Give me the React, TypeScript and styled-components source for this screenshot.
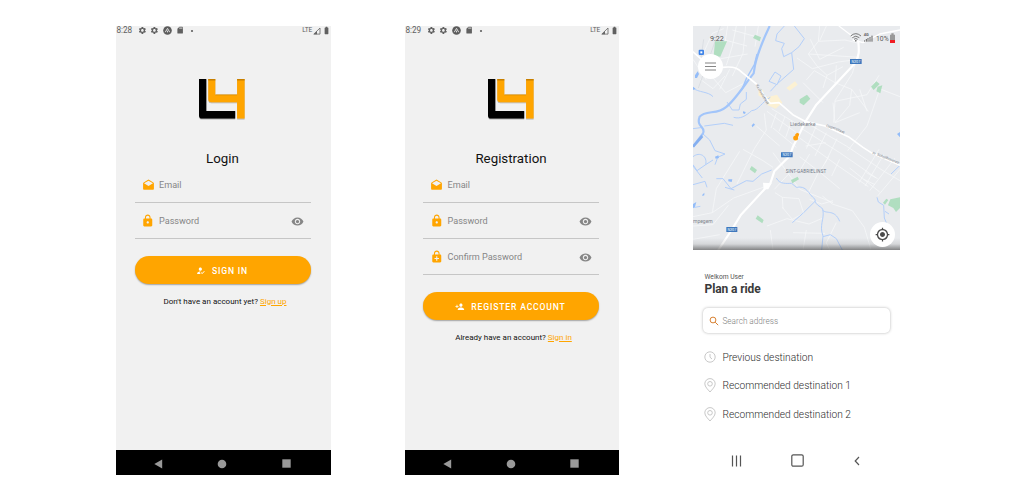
import React from "react";
import styled, { createGlobalStyle } from "styled-components";
import {
  MdBatteryFull,
  MdDrafts,
  MdEnhancedEncryption,
  MdHowToReg,
  MdLock,
  MdMyLocation,
  MdPersonAdd,
  MdSdCard,
  MdSettings,
  MdVisibility,
} from "react-icons/md";

const Global = createGlobalStyle`
  * { box-sizing: border-box; }
  body { margin: 0; background: #fff; font-family: Roboto, "Liberation Sans", sans-serif; }
  svg { display: block; flex: none; }
`;

const Stage = styled.main`
  display: flex;
  gap: 74px;
  width: 1024px;
  height: 500px;
  padding: 26px 0 25px 116px;
  overflow: hidden;
`;

const Phone = styled.section<{ $width: number }>`
  display: flex;
  flex-direction: column;
  flex: none;
  width: ${(p) => p.$width}px;
  height: 449px;
  background: #f1f1f1;
`;

const StatusBar = styled.header`
  display: flex;
  align-items: center;
  height: 9px;
  padding: 0 0 0 0.5px;
  color: #606060;
  font-size: 8.2px;
  line-height: 9px;
`;

const Clock = styled.span`
  width: 21px;
  letter-spacing: -0.1px;
`;

const StatusIcons = styled.div`
  display: flex;
  flex: 1;
  align-items: center;
  gap: 4px;
`;

const Signal = styled.div`
  display: flex;
  align-items: center;
  font-size: 6.6px;
  gap: 1px;
  letter-spacing: -0.2px;
`;

const LogoBox = styled.div<{ $lift: number }>`
  display: flex;
  justify-content: center;
  height: 114px;
  padding: ${(p) => 43 - p.$lift}px 3px 0 0;
`;

const Title = styled.h1`
  margin: 0;
  padding-right: 2px;
  height: 18px;
  line-height: 20px;
  text-align: center;
  font-size: 13.3px;
  font-weight: 400;
  color: #111;
`;

const Form = styled.div<{ $left: number }>`
  display: flex;
  flex-direction: column;
  width: 176px;
  margin-left: ${(p) => p.$left}px;
`;

const Field = styled.div`
  display: flex;
  align-items: center;
  height: 36px;
  padding: 1px 7px 0 6.5px;
  border-bottom: 1px solid #c6c6c6;
  color: #868686;
  font-size: 9.1px;
`;

const FieldIcon = styled.span`
  display: flex;
  justify-content: center;
  width: 14px;
  margin-right: 4px;
  color: #ffa500;
`;

const FieldLabel = styled.span`
  flex: 1;
`;

const Button = styled.button`
  display: flex;
  align-items: center;
  justify-content: center;
  gap: 6.5px;
  height: 28px;
  margin: 17px 0 0;
  padding: 1px 1px 0 0;
  border: 0;
  border-radius: 14px;
  background: #ffa500;
  box-shadow: 0 1px 1.5px rgba(0, 0, 0, 0.32);
  color: #fff;
  font: 500 8.6px Roboto, sans-serif;
  letter-spacing: 0.83px;
`;

const Prompt = styled.p`
  margin: 11.5px 0 0;
  padding-left: 5px;
  text-align: center;
  font-size: 8px;
  line-height: 12px;
  color: #111;
  white-space: nowrap;
`;

const Link = styled.a`
  color: #ffa500;
  text-decoration: underline;
`;

const NavBar = styled.footer`
  display: flex;
  align-items: center;
  justify-content: space-between;
  height: 25px;
  margin-top: auto;
  padding: 2px 40.5px 0 38px;
  background: #000;
`;

const RidePhone = styled.section`
  display: flex;
  flex-direction: column;
  flex: none;
  width: 207px;
  height: 449px;
`;

const MapArea = styled.div`
  position: relative;
  height: 224px;
  overflow: hidden;
`;

const RoundButton = styled.div<{ $x: number; $y: number; $size: number }>`
  position: absolute;
  left: ${(p) => p.$x}px;
  top: ${(p) => p.$y}px;
  display: flex;
  align-items: center;
  justify-content: center;
  width: ${(p) => p.$size}px;
  height: ${(p) => p.$size}px;
  border-radius: 50%;
  background: #fff;
  color: #4a4a4a;
`;

const Greeting = styled.p`
  margin: 21.5px 0 0 11.5px;
  font-size: 6.7px;
  line-height: 10px;
  color: #555;
`;

const Heading = styled.h2`
  margin: 0.5px 0 0 11.5px;
  font-size: 12px;
  line-height: 15px;
  font-weight: 700;
  letter-spacing: -0.1px;
  color: #3a3a3a;
`;

const SearchBox = styled.div`
  display: flex;
  align-items: center;
  gap: 3.5px;
  width: 187px;
  height: 25px;
  margin: 11px 0 0 10px;
  padding: 0 6px;
  border-radius: 5px;
  background: #fff;
  box-shadow: 0 0 3px rgba(0, 0, 0, 0.3);
  color: #808080;
  font-size: 8.2px;
  font-weight: 300;
`;

const Places = styled.ul`
  display: flex;
  flex-direction: column;
  margin: 10px 0 0;
  padding: 0 0 0 11px;
  list-style: none;
`;

const Place = styled.li<{ $height: number }>`
  display: flex;
  align-items: center;
  gap: 6.5px;
  height: ${(p) => p.$height}px;
  font-size: 10.2px;
  font-weight: 300;
  color: #2c2c2c;
  white-space: nowrap;
`;

const RideNav = styled.footer`
  display: flex;
  align-items: center;
  justify-content: space-between;
  height: 14px;
  margin-top: 24.5px;
  padding: 0 40.5px 0 37.5px;
`;

const Logo = () => (
  <svg width="48" height="44" viewBox="0 0 48 44">
    <defs>
      <filter id="logoShadow" x="-10%" y="-10%" width="120%" height="125%">
        <feDropShadow dx="0" dy="0.7" stdDeviation="0.5" floodOpacity="0.4" />
      </filter>
    </defs>
    <g filter="url(#logoShadow)">
      <path d="M1 1h7.3v32h28.9v7.600H4Q1 40.600 1 37.500Z" fill="#000" />
      <path d="M10.300 1h7v16h21.800V1H46.600v39.600H39.100V24.300H13.400q-3.100 0-3.100-3Z" fill="#ffa500" />
    </g>
    <path d="M10.300 1h7v1.500h-7ZM39.100 1h7.500v1.500h-7.500Z" fill="#c77f00" />
    <path d="M17.300 16.400h21.800v.9H17.300Z" fill="#d48a00" />
  </svg>
);

const PhoneStatus = ({ time }: { time: string }) => (
  <StatusBar>
    <Clock>{time}</Clock>
    <StatusIcons>
      <MdSettings size={8.8} />
      <MdSettings size={8.800} />
      <svg width="9" height="9" viewBox="0 0 9 9">
        <circle cx="4.5" cy="4.5" r="4.3" fill="#5c5c5c" />
        <path d="M2.300 6.200 4.500 2.300l2.200 3.900M4.500 4.700v1.700" fill="none" stroke="#ddd" strokeWidth="1" />
      </svg>
      <MdSdCard size={8.300} />
      <svg width="8" height="8" viewBox="0 0 8 8">
        <circle cx="4" cy="4" r="1.1" fill="#606060" />
      </svg>
    </StatusIcons>
    <Signal>
      LTE
      <svg width="8" height="8" viewBox="0 0 8 8">
        <path d="M.8 7.100 7 1v6.100Z" fill="none" stroke="#666" strokeWidth=".8" />
        <path d="M.8 7.200 4 4v3.200Z" fill="#666" />
      </svg>
      <MdBatteryFull size={9} />
    </Signal>
  </StatusBar>
);

const PhoneNav = () => (
  <NavBar>
    <svg width="9" height="10" viewBox="0 0 9 10"><path d="M.3 5 8.200.6v8.800Z" fill="#999" /></svg>
    <svg width="10" height="10" viewBox="0 0 10 10"><circle cx="5" cy="5" r="4.300" fill="#999" /></svg>
    <svg width="9" height="9" viewBox="0 0 9 9"><path d="M.3.3h8.400v8.400H.3Z" fill="#999" /></svg>
  </NavBar>
);

type InputProps = { icon: React.ReactNode; label: string; secret?: boolean };

const Input = ({ icon, label, secret }: InputProps) => (
  <Field>
    <FieldIcon>{icon}</FieldIcon>
    <FieldLabel>{label}</FieldLabel>
    {secret && <MdVisibility size={13} />}
  </Field>
);

const RoadMap = () => (
  <svg width="207" height="224" viewBox="0 0 621 672">
    <defs>
      <linearGradient id="mapShade" x1="0" y1="0" x2="0" y2="1">
        <stop offset="0" stopColor="#444" stopOpacity="0" />
        <stop offset="0.5" stopColor="#444" stopOpacity="0.12" />
        <stop offset="1" stopColor="#444" stopOpacity="0.62" />
      </linearGradient>
      <path id="opperPath" d="M399 303 Q432 309 462 330" />
      <path id="schollPath" d="M538 384 Q580 398 640 424" />
    </defs>
    <path d="M0 0h621v672H0Z" fill="#e9ebee" />

    <g fill="none" stroke="#f7f8fa" strokeWidth="2.2" strokeLinejoin="round">
      <path d="M30 84 58 22 92 8M104 0 96 50 70 110M130 0 118 60 100 118M158 0 150 82 118 150M96 42l66 18M72 100l92-16M118 12l78 22M196 0l-10 62" />
      <path d="M22 160 60 188 96 150M36 128l62 72 54-28M110 130l-30 60M0 100l40 62" />
      <path d="M380 0 376 46 346 84 372 120 402 148 390 186M376 46l80-4 42 10M346 84l152 10M352 40l28 60 72-36M312 96l46 32 78-20 60-8M340 162l24-28 62 36M400 0l-20 44M402 148l48-26" />
      <path d="M498 74l-20 68-52 82-4 66M426 170l50 20 50 66M426 226l96-20 36-58M420 230l6 60 74-30M430 118l-4 60M330 170l60 60M476 190l-6 48-44 52M558 196l-36 104-58 74M564 190l57 22M500 190l22 66" />
      <path d="M236 248l86 52M222 256l88 64M214 262l6 50-36 56-52 106M190 300l70 60M250 262l-16 44M276 272l-18 44M296 284l-18 50M240 306l70 58" />
      <path d="M340 290l120 70 110 74 51 30M330 310l110 70 110 76M320 336l110 80 96 66M370 300l-30 68M400 320l-34 70M432 338l-36 74M338 360l60-10M320 392l60 46 60 50M380 438l28-48M350 384l-26 44" />
      <path d="M498 470l60-100M516 480l56-94M520 440l34 18M512 460l34 16M554 510l67-80M530 494l76-98M470 426l90 72M440 400l-24 50" />
      <path d="M300 430l-56 60M376 440l-30 60M388 510l30 24 60 20 36 50 20 68M240 380l80 110 100 40" />
      <path d="M140 376l-70 112-12 72-58 12M150 370l60 34 30 20M58 560l64-44 94-34M0 600l60-4 46-58M246 500l22 14 2 34M268 514l50 4 14 44-34 18-30-36M222 600l60-22 66 16 42-18M240 672l-8-60M330 672l10-60M430 590l-30 60 10 22M0 640l80-14" />
      <path d="M350 520l36 14 34-10M300 620l96 2" />
    </g>
    <path d="M82 0C62 60 40 120 16 186M32 40l-10 70" fill="none" stroke="#d9dce1" strokeWidth="2.500" />

    <path d="m222 214 30-8 16 24-20 18-24-10ZM280 186l26-20 8 10-24 18ZM198 184l14 10-4 22-12-8Z" fill="#fcf1d3" />
    <path d="m66 46 36 0-20 46-20-2ZM186 26l18 8-4 12-20-10ZM320 220l22-14 10 12-20 20-12-8ZM534 182l16-16 10 8-18 18ZM554 182l14-4-6 24-12-6ZM176 420l16 12-6 10-16-12ZM294 462l20-10 4 8-20 12ZM194 568l18 14-4 10-20-14ZM592 520l29-6v32l-12 12-8-12-16-8ZM570 530l10-12 6 4-10 14Z" fill="#b0dec0" />

    <g fill="none" stroke="#b3cffa" strokeWidth="3" strokeLinejoin="round">
      <path d="M304 0l30 38-16 24-22 18-24 12-6-24 8-16-26-8 4-20 22-24M296 80l6 50-50 44-20 22M246 138l18 12-12 26-24-10Z" />
      <path d="M232 214c-26 14-34 38-56 40-18 16-34 26-54 20M160 198l0 22-18 14-4 18-20 0-16-24M0 186c16 14 46 10 60 26M34 300l60-8 26 6" />
      <path d="M0 308l30-4M28 322l22 20 16 32 30 10-22 10-8 22M0 392c20-16 44-2 38 24l-26 18-12-18M38 416l22-14M0 420l28 36M70 458l20 0 24 30 46-24 20 2 26-22 30-12M96 484l28 8" />
      <path d="M0 476l36-10 6 18M0 545l22-4" />
      <path d="M250 456c10 20 32 16 46 16l14 12c32-6 34 18 56 36 0 22 24 20 24 34M366 526l-34 34-34 30M388 552c14 14 36-4 52 34M390 554c4 26-12 44 0 76l-4 42M390 632l22-6 18 12 18 34" />
      <path d="M552 514l4 14 16 10 2 38 6 14M576 556l12 8M594 444l27-26" />
    </g>
    <path d="M230 0C212 38 194 80 186 118L182 142C160 168 126 224 98 244C74 266 36 252 20 272C8 304 40 302 30 322L0 362" fill="none" stroke="#a2c5fa" strokeWidth="6.500" />
    <path d="M192 84 184 116 160 158 146 192" fill="none" stroke="#a2c5fa" strokeWidth="4" />
    <path d="M28 330 0 362" fill="none" stroke="#85aff0" strokeWidth="8" />
    <path d="m6 148 8-12 4 8-6 12-6 0ZM66 392l10-4 2 8-10 2ZM106 460l12 0-2 8-10-2ZM176 298l6-6 4 4-8 8ZM150 256l8 2-2 6-6-2ZM0 534l10-6-4 14-6 4ZM28 506l6-6 0 8-6 2ZM612 324l9-6v16ZM0 182l8 6-8 4Z" fill="#93bcf8" />

    <g fill="none" stroke="#fff" strokeLinecap="round" strokeLinejoin="round">
      <path d="M0 78 30 104M88 124C126 120 136 128 148 140L190 174L222 220L232 232L258 230L302 268L336 286L396 300L466 332L510 364L538 382L621 418" strokeWidth="5" />
      <path d="M438 0 482 34" strokeWidth="3.500" />
      <path d="M496 46C498 74 500 88 486 112L370 236L338 286L300 362L290 390L244 436L232 472L216 488L144 566L112 618L76 672" strokeWidth="6.500" />
      <path d="M480 42 510 50 560 24 621 12" strokeWidth="4" />
    </g>
    <path d="M210 470l26 2-10 18-14 0Z" fill="#fff" />

    <g fontFamily="Roboto, sans-serif" fill="#80858d">
      <text x="291" y="301" fontSize="16">Liedekerke</text>
      <text x="278" y="442" fontSize="13.500" fill="#6d7685" letterSpacing=".5">SINT-GABRIELINST</text>
      <text x="0" y="590" fontSize="15">mpegem</text>
      <text transform="translate(188 177) rotate(60)" fontSize="11.500">Kasteelstraat</text>
      <text fontSize="11"><textPath href="#opperPath">Opperstraat</textPath></text>
      <text fontSize="11"><textPath href="#schollPath">Fr. Schollhoverstr</textPath></text>
    </g>
    <path d="M471 99h35v15h-35ZM264 379h35v15h-35ZM100 603h33v15h-33Z" fill="#3f78bd" />
    <g fontFamily="Roboto, sans-serif" fill="#dbe6f5" fontSize="11" fontWeight="500" textAnchor="middle">
      <text x="488.500" y="110.500">N207</text>
      <text x="281.500" y="390.500">N207</text>
      <text x="116.500" y="614.500">N207</text>
    </g>
    <rect x="17" y="71" width="16" height="16" rx="3" fill="#3e83e8" />
    <path d="M22 76h6v6h-6Z" fill="#fff" />
    <circle cx="308" cy="336" r="7.500" fill="#ff9f0a" />
    <path d="m306 326 6-6 7 3-3 9-6 3Z" fill="#ff9f0a" />

    <path d="M0 636h621v36H0Z" fill="url(#mapShade)" />
    <text x="51" y="45" fontFamily="Roboto, sans-serif" fontSize="21.500" fill="#555">9:22</text>
    <g fill="none" stroke="#606060" strokeWidth="2.500">
      <path d="M473 30q15.500-14 31 0M478 35q10.500-9 21 0M483 40q5.500-5 11 0" />
      <path d="M515 43v4M520 39v8M525 36v11M531 33v14M537 29v18" strokeWidth="3" />
    </g>
    <circle cx="488.500" cy="44.500" r="2.500" fill="#606060" />
    <text x="512" y="31" fontFamily="Roboto, sans-serif" fontSize="12" fontWeight="700" fill="#606060">4G</text>
    <text x="549" y="45" fontFamily="Roboto, sans-serif" fontSize="20.500" fill="#606060">10%</text>
    <path d="M591 26h4v-4h7v4h4v25h-15Z" fill="#999" />
    <path d="M591 42h15v9h-15Z" fill="#f01c22" />
  </svg>
);

const PinIcon = () => (
  <svg width="12" height="15" viewBox="0 0 12 15" fill="none" stroke="#c2c2c2" strokeWidth=".9">
    <path d="M6 14C4 11.600.8 8.800.8 5.800a5.200 5.200 0 0 1 10.400 0C11.200 8.800 8 11.600 6 14Z" />
    <circle cx="6" cy="5.800" r="2.300" />
  </svg>
);

export default function App() {
  return (
    <>
      <Global />
      <Stage>
        <Phone $width={215}>
          <PhoneStatus time="8:28" />
          <LogoBox $lift={0}><Logo /></LogoBox>
          <Title>Login</Title>
          <Form $left={18.5}>
            <Input icon={<MdDrafts size={13} />} label="Email" />
            <Input icon={<MdLock size={13.500} />} label="Password" secret />
            <Button><MdHowToReg size={9.500} />SIGN IN</Button>
            <Prompt>Don't have an account yet? <Link>Sign up</Link></Prompt>
          </Form>
          <PhoneNav />
        </Phone>

        <Phone $width={214}>
          <PhoneStatus time="8:29" />
          <LogoBox $lift={0.5}><Logo /></LogoBox>
          <Title>Registration</Title>
          <Form $left={18}>
            <Input icon={<MdDrafts size={13} />} label="Email" />
            <Input icon={<MdLock size={13.500} />} label="Password" secret />
            <Input icon={<MdEnhancedEncryption size={13.500} />} label="Confirm Password" secret />
            <Button><MdPersonAdd size={9.500} />REGISTER ACCOUNT</Button>
            <Prompt>Already have an account? <Link>Sign in</Link></Prompt>
          </Form>
          <PhoneNav />
        </Phone>

        <RidePhone>
          <MapArea>
            <RoadMap />
            <RoundButton $x={4.5} $y={28} $size={25}>
              <svg width="11" height="9" viewBox="0 0 11 9">
                <path d="M0 1h11M0 4.500h11M0 8h11" stroke="#777" strokeWidth=".9" />
              </svg>
            </RoundButton>
            <RoundButton $x={176.5} $y={195.5} $size={25}><MdMyLocation size={15} /></RoundButton>
          </MapArea>
          <Greeting>Welkom User</Greeting>
          <Heading>Plan a ride</Heading>
          <SearchBox>
            <svg width="10" height="10" viewBox="0 0 10 10" fill="none" stroke="#d88132" strokeWidth="1">
              <circle cx="4" cy="4" r="2.900" />
              <path d="m6.200 6.200 3 3" />
            </svg>
            Search address
          </SearchBox>
          <Places>
            <Place $height={28}>
              <svg width="12" height="12" viewBox="0 0 12 12" fill="none" stroke="#c2c2c2" strokeWidth=".9">
                <circle cx="6" cy="6" r="5.200" />
                <path d="M6 3v3.200L8 8" />
              </svg>
              Previous destination
            </Place>
            <Place $height={28}><PinIcon />Recommended destination 1</Place>
            <Place $height={30}><PinIcon />Recommended destination 2</Place>
          </Places>
          <RideNav>
            <svg width="11" height="12" viewBox="0 0 11 12"><path d="M1.500.500v11M5.500.500v11M9.500.500v11" stroke="#555" strokeWidth="1.200" /></svg>
            <svg width="13" height="13" viewBox="0 0 13 13"><rect x=".8" y=".8" width="11.400" height="11.400" rx="1.500" fill="none" stroke="#555" strokeWidth="1.200" /></svg>
            <svg width="6" height="10" viewBox="0 0 6 10"><path d="M5 1 1.200 5 5 9" fill="none" stroke="#555" strokeWidth="1.200" /></svg>
          </RideNav>
        </RidePhone>
      </Stage>
    </>
  );
}
